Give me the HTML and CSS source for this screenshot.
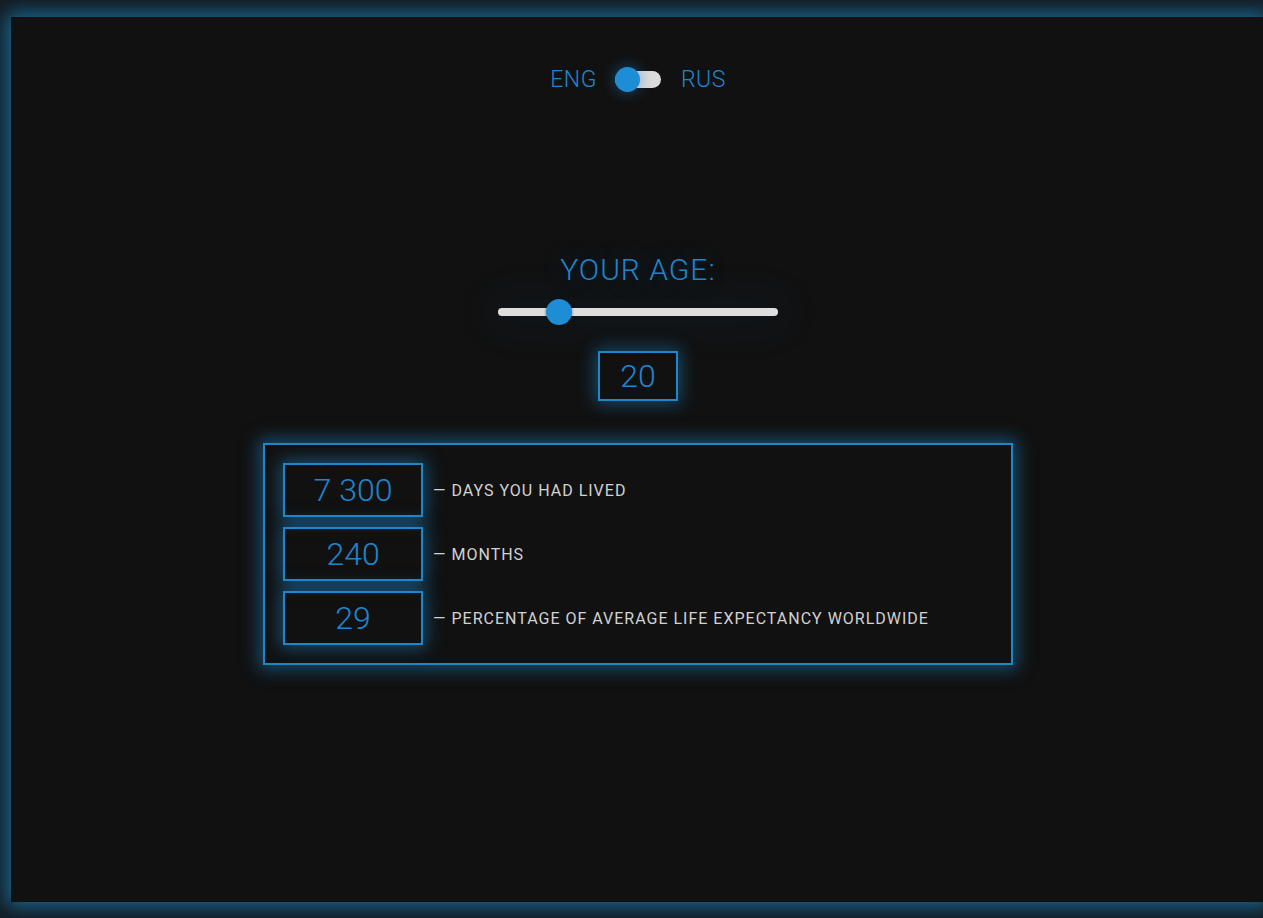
FILE: index.html
```html
<!DOCTYPE html>
<html lang="en">
<head>
<meta charset="utf-8">
<title>Age</title>
<link rel="stylesheet" href="styles.css">
</head>
<body>
<div class="page">
  <div class="lang">
    <span class="lang-label">ENG</span>
    <span class="switch"><span class="switch-knob"></span></span>
    <span class="lang-label">RUS</span>
  </div>

  <div class="age">
    <div class="age-title">YOUR AGE:</div>
    <div class="slider">
      <div class="slider-track"></div>
      <div class="slider-thumb" style="left: 48px"></div>
    </div>
    <div class="age-value">20</div>
  </div>

  <div class="results">
    <div class="row">
      <div class="num">7 300</div>
      <div class="label">— DAYS YOU HAD LIVED</div>
    </div>
    <div class="row">
      <div class="num">240</div>
      <div class="label">— MONTHS</div>
    </div>
    <div class="row">
      <div class="num">29</div>
      <div class="label">— PERCENTAGE OF AVERAGE LIFE EXPECTANCY WORLDWIDE</div>
    </div>
  </div>
</div>
</body>
</html>
```

FILE: styles.css
```css
html, body {
  margin: 0;
  padding: 0;
  overflow: hidden;
  background: #141c23;
  height: 918px;
}

body {
  font-family: Roboto, "Liberation Sans", sans-serif;
  font-weight: 300;
}

.page {
  box-sizing: border-box;
  margin: 17px 0 0 11px;
  width: 1254px;
  height: 885px;
  background: #111111;
  box-shadow: 0 0 18px 4px rgba(26, 120, 170, 0.85);
  display: flex;
  flex-direction: column;
  align-items: center;
  padding-top: 50px;
}

.lang {
  display: flex;
  align-items: center;
  height: 25px;
}

.lang-label {
  color: #1f86cc;
  font-size: 23px;
  font-weight: 300;
  letter-spacing: 0.5px;
  line-height: 25px;
}

.switch {
  position: relative;
  width: 46px;
  height: 17px;
  border-radius: 9px;
  background: #dcdcdc;
  margin: 0 20px 0 18px;
}

.switch-knob {
  position: absolute;
  left: 0;
  top: -4px;
  width: 25px;
  height: 25px;
  border-radius: 50%;
  background: #1d8dd6;
  box-shadow: 0 0 12px 3px rgba(30, 120, 180, 0.35);
}

.age {
  display: flex;
  flex-direction: column;
  align-items: center;
  margin-top: 160px;
}

.age-title {
  color: #1f86cc;
  font-size: 30px;
  font-weight: 300;
  letter-spacing: 1px;
  line-height: 36px;
  text-shadow: 0 0 24px rgba(30, 130, 200, 0.35);
}

.slider {
  position: relative;
  width: 280px;
  height: 26px;
  margin-top: 11px;
}

.slider-track {
  position: absolute;
  left: 0;
  right: 0;
  top: 9px;
  height: 8px;
  border-radius: 4px;
  background: #dedede;
  box-shadow: 0 0 40px 12px rgba(30, 120, 180, 0.07);
}

.slider-thumb {
  position: absolute;
  top: 0;
  width: 26px;
  height: 26px;
  border-radius: 50%;
  background: #1d8dd6;
  box-shadow: 0 0 3px rgba(0, 0, 0, 0.5);
}

.age-value {
  box-sizing: border-box;
  margin-top: 26px;
  width: 80px;
  height: 50px;
  border: 2px solid #1f86c8;
  color: #1f86cc;
  font-size: 32px;
  font-weight: 300;
  display: flex;
  align-items: center;
  justify-content: center;
  box-shadow: 0 0 16px 3px rgba(30, 140, 210, 0.45);
}

.results {
  box-sizing: border-box;
  margin-top: 42px;
  width: 750px;
  border: 2px solid #1f86c8;
  padding: 18px;
  display: flex;
  flex-direction: column;
  gap: 10px;
  box-shadow: 0 0 16px 4px rgba(30, 140, 210, 0.5);
}

.row {
  display: flex;
  align-items: center;
  gap: 10px;
}

.num {
  box-sizing: border-box;
  width: 140px;
  height: 54px;
  border: 2px solid #1f86c8;
  color: #1f86cc;
  font-size: 32px;
  font-weight: 300;
  display: flex;
  align-items: center;
  justify-content: center;
  box-shadow: 0 0 16px 3px rgba(30, 140, 210, 0.5);
}

.label {
  color: #d2d2d2;
  font-size: 16px;
  font-weight: 400;
  letter-spacing: 1px;
}
```
